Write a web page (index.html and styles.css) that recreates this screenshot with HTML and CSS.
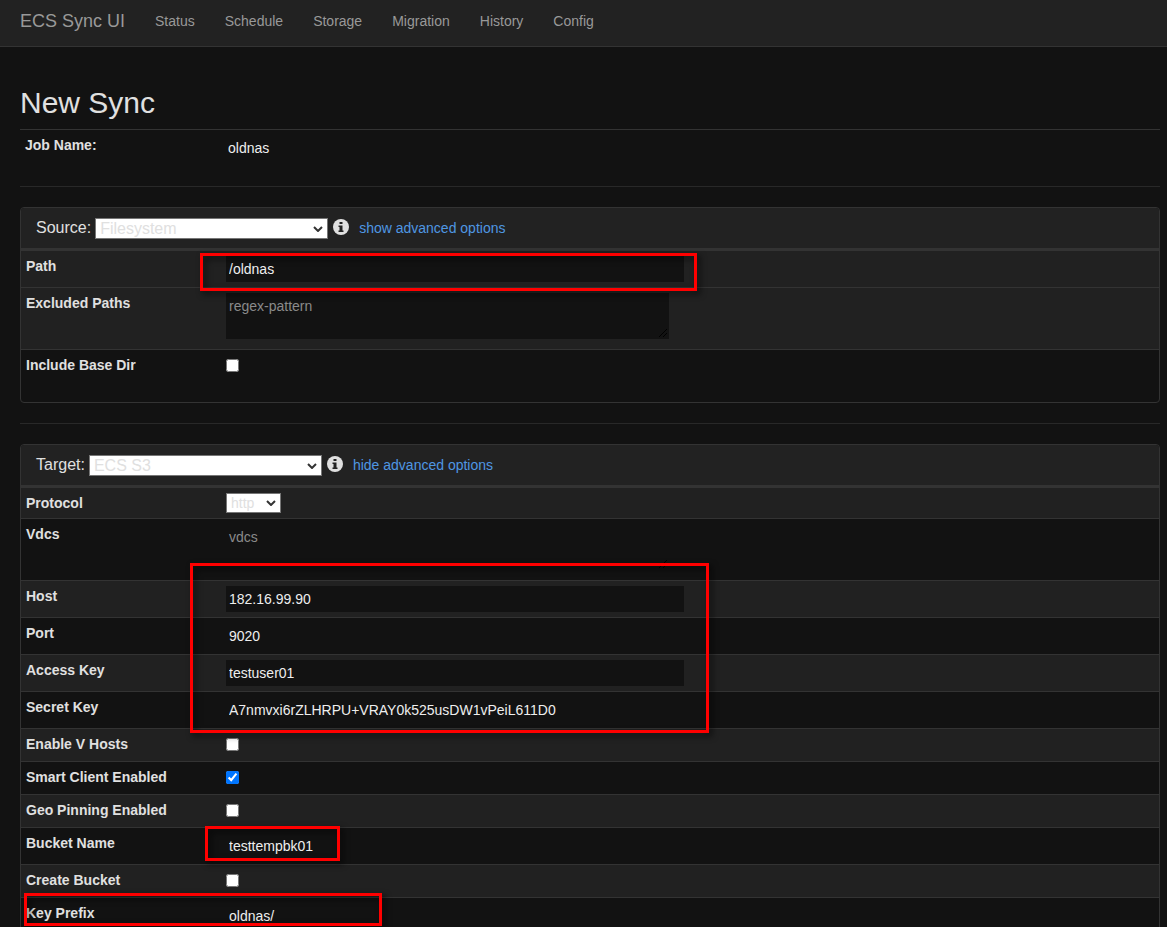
FILE: index.html
```html
<!DOCTYPE html>
<html lang="en">
<head>
    <meta charset="UTF-8">
    <title>ECS Sync UI</title>
    <link rel="stylesheet" href="styles.css">
</head>
<body>
<nav class="navbar">
    <a class="brand" href="#">ECS Sync UI</a>
    <a href="#status">Status</a>
    <a href="#schedule">Schedule</a>
    <a href="#storage">Storage</a>
    <a href="#migration">Migration</a>
    <a href="#history">History</a>
    <a href="#config">Config</a>
</nav>
<form class="container">
    <h2>New Sync</h2>
    <table class="form-table job">
        <tr>
            <th scope="row"><label for="jobName">Job Name:</label></th>
            <td><input type="text" id="jobName" value="oldnas"></td>
        </tr>
    </table>
    <hr>

    <!-- source -->
    <div class="panel">
        <div class="panel-heading">
            <label for="source">Source:</label>
            <select id="source">
                <option>Filesystem</option>
            </select>
            <button type="button" class="info" aria-label="Source info">
                <svg width="16" height="16" viewBox="0 0 16 16">
                    <circle cx="8" cy="8" r="8" fill="#e0e0e0"/>
                    <path d="M6.500 3h3v2h-3zM5.500 6.500h4v5h1v1.500h-5v-1.500h1v-3.500h-1z" fill="#222"/>
                </svg>
            </button>
            <a href="#source-advanced">show advanced options</a>
        </div>
        <table class="form-table">
            <tr class="odd">
                <th scope="row"><label for="path">Path</label></th>
                <td><input type="text" id="path" value="/oldnas"></td>
            </tr>
            <tr class="odd">
                <th scope="row"><label for="excluded">Excluded Paths</label></th>
                <td><textarea id="excluded" rows="2" placeholder="regex-pattern"></textarea></td>
            </tr>
            <tr>
                <th scope="row"><label for="baseDir">Include Base Dir</label></th>
                <td><input type="checkbox" id="baseDir"></td>
            </tr>
        </table>
        <div class="mark mark-path"></div>
    </div>
    <hr>

    <!-- target -->
    <div class="panel">
        <div class="panel-heading">
            <label for="target">Target:</label>
            <select id="target">
                <option>ECS S3</option>
            </select>
            <button type="button" class="info" aria-label="Target info">
                <svg width="16" height="16" viewBox="0 0 16 16">
                    <circle cx="8" cy="8" r="8" fill="#e0e0e0"/>
                    <path d="M6.500 3h3v2h-3zM5.500 6.500h4v5h1v1.500h-5v-1.500h1v-3.500h-1z" fill="#222"/>
                </svg>
            </button>
            <a href="#target-advanced">hide advanced options</a>
        </div>
        <table class="form-table">
            <tr class="odd">
                <th scope="row"><label for="protocol">Protocol</label></th>
                <td>
                    <select id="protocol">
                        <option>http</option>
                        <option>https</option>
                    </select>
                </td>
            </tr>
            <tr>
                <th scope="row"><label for="vdcs">Vdcs</label></th>
                <td><textarea id="vdcs" rows="2" placeholder="vdcs"></textarea></td>
            </tr>
            <tr class="odd">
                <th scope="row"><label for="host">Host</label></th>
                <td><input type="text" id="host" value="182.16.99.90"></td>
            </tr>
            <tr>
                <th scope="row"><label for="port">Port</label></th>
                <td><input type="text" id="port" value="9020"></td>
            </tr>
            <tr class="odd">
                <th scope="row"><label for="accessKey">Access Key</label></th>
                <td><input type="text" id="accessKey" value="testuser01"></td>
            </tr>
            <tr>
                <th scope="row"><label for="secretKey">Secret Key</label></th>
                <td><input type="text" id="secretKey" value="A7nmvxi6rZLHRPU+VRAY0k525usDW1vPeiL611D0"></td>
            </tr>
            <tr class="odd">
                <th scope="row"><label for="vHosts">Enable V Hosts</label></th>
                <td><input type="checkbox" id="vHosts"></td>
            </tr>
            <tr>
                <th scope="row"><label for="smartClient">Smart Client Enabled</label></th>
                <td><input type="checkbox" id="smartClient" checked></td>
            </tr>
            <tr class="odd">
                <th scope="row"><label for="geoPinning">Geo Pinning Enabled</label></th>
                <td><input type="checkbox" id="geoPinning"></td>
            </tr>
            <tr>
                <th scope="row"><label for="bucket">Bucket Name</label></th>
                <td><input type="text" id="bucket" value="testtempbk01"></td>
            </tr>
            <tr class="odd">
                <th scope="row"><label for="createBucket">Create Bucket</label></th>
                <td><input type="checkbox" id="createBucket"></td>
            </tr>
            <tr>
                <th scope="row"><label for="keyPrefix">Key Prefix</label></th>
                <td><input type="text" id="keyPrefix" value="oldnas/"></td>
            </tr>
        </table>
        <div class="mark mark-keys"></div>
        <div class="mark mark-bucket"></div>
        <div class="mark mark-prefix"></div>
    </div>
</form>
</body>
</html>
```
FILE: styles.css
```css
*{
    box-sizing: border-box;
}
html{
    overflow: hidden;
}
body{
    margin: 0;
    background-color: #121212;
    color: #e0e0e0;
    font-family: "Liberation Sans", Arial, sans-serif;
    font-size: 14px;
    line-height: 20px;
}
a{
    color: #4f97e3;
    text-decoration: none;
}
input, select, textarea{
    font-family: inherit;
    font-size: 14px;
}

/* navbar */
.navbar{
    display: flex;
    padding: 11px 5px 15px;
    background-color: #222;
    border-bottom: 1px solid #333;
}
.navbar a{
    padding: 0 15px;
    color: #999;
}
.navbar .brand{
    font-size: 18px;
}

.container{
    padding: 39px 7px 0 20px;
}
h2{
    margin: 0 0 10px;
    font-size: 30px;
    font-weight: normal;
    line-height: 33px;
}
hr{
    margin: 20px 0;
    border: 0;
    border-top: 1px solid #282828;
}

/* panels */
.panel{
    position: relative;
    border: 1px solid #333;
    border-radius: 4px;
}
.panel-heading{
    display: flex;
    align-items: flex-start;
    padding: 10px 15px 9px;
    background-color: #222;
    border-radius: 3px 3px 0 0;
}
.panel-heading label{
    margin-right: 4px;
    font-size: 16px;
}
.panel-heading select{
    width: 233px;
    height: 21px;
    font-size: 16px;
}
.panel-heading .info{
    display: flex;
    margin: 1px 10px 0 5px;
    padding: 0;
    border: 0;
    background: none;
}
.panel .form-table{
    margin-bottom: 20px;
    border-top: 3px solid #333;
}

/* form rows */
.form-table{
    width: 100%;
    table-layout: fixed;
    border-spacing: 0;
}
.form-table.job{
    border-top: 1px solid #333;
}
.form-table th,
.form-table td{
    padding: 5px;
    text-align: left;
    vertical-align: top;
}
.form-table th{
    width: 200px;
}
.form-table label{
    display: block;
}
.form-table tr + tr > *{
    border-top: 1px solid #333;
}
.odd{
    background-color: #212121;
}
input[type="text"],
textarea{
    display: block;
    padding: 3px;
    border: 0;
    background-color: #121212;
    color: #eee;
    line-height: 20px;
}
input[type="text"]{
    width: 458px;
    height: 26px;
}
textarea{
    width: 443px;
    margin-bottom: 5px;
}
textarea::-webkit-resizer{
    background: url("data:image/svg+xml,%3Csvg xmlns='http://www.w3.org/2000/svg' width='15' height='15'%3E%3Cpath d='M5 13l8-8M9 13l4-4' stroke='%23000'/%3E%3C/svg%3E") no-repeat right bottom;
}
::placeholder{
    color: #8a8a8a;
}
input[type="checkbox"]{
    display: block;
    margin: 4px 0 5px;
}
select{
    display: block;
    padding: 0 20px 0 4px;
    border: 1px solid #767676;
    border-radius: 0;
    background: #fff url("data:image/svg+xml,%3Csvg xmlns='http://www.w3.org/2000/svg' width='10' height='6'%3E%3Cpath d='M1 1l4 4 4-4' fill='none' stroke='%23333' stroke-width='2'/%3E%3C/svg%3E") no-repeat right 4px center;
    color: #e0e0e0;
    appearance: none;
}
.form-table select{
    width: 55px;
    height: 20px;
}

/* red highlight boxes */
.mark{
    position: absolute;
    border: 3px solid #f00;
    filter: drop-shadow(3px 3px 3px rgba(0, 0, 0, .7));
    pointer-events: none;
}
.mark-path{
    top: 45px;
    left: 179px;
    width: 497px;
    height: 38px;
}
.mark-keys{
    top: 118px;
    left: 169px;
    width: 519px;
    height: 170px;
}
.mark-bucket{
    top: 381px;
    left: 184px;
    width: 135px;
    height: 35px;
}
.mark-prefix{
    top: 448px;
    left: 3px;
    width: 358px;
    height: 33px;
}
```
